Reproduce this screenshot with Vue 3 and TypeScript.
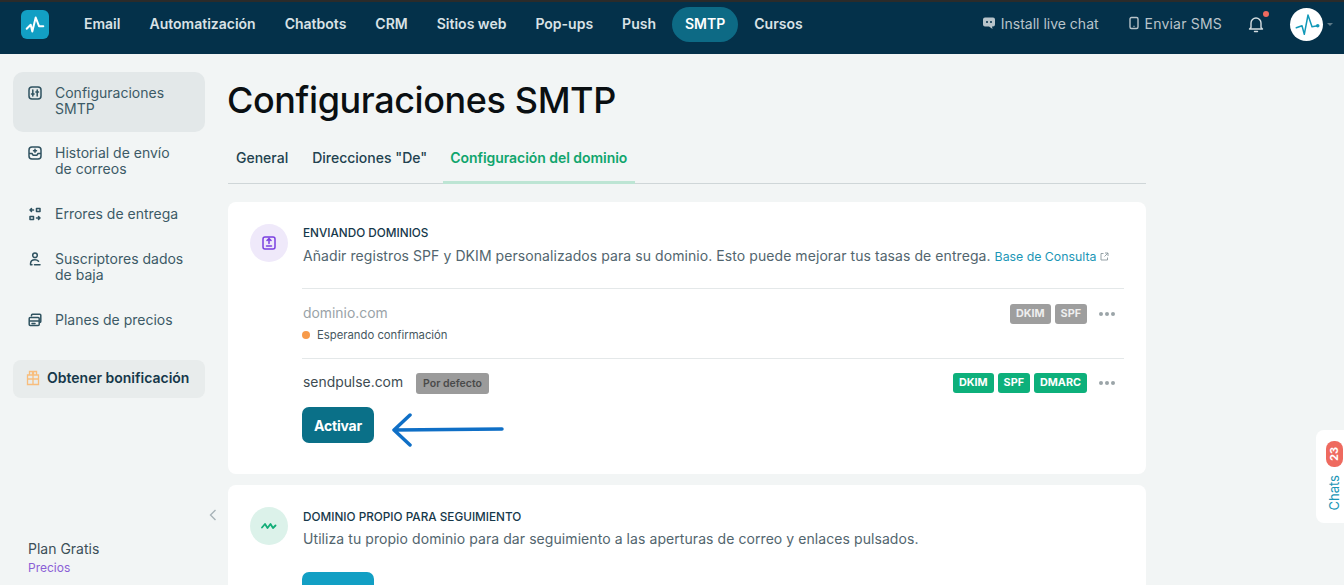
<script setup lang="ts">
interface SideItem {
  label: string
  icon: string
  active?: boolean
}

const navItems = ['Email', 'Automatización', 'Chatbots', 'CRM', 'Sitios web', 'Pop-ups', 'Push', 'SMTP', 'Cursos']

const sideItems: SideItem[] = [
  {
    label: 'Configuraciones SMTP',
    active: true,
    icon: 'M5 2h6a3 3 0 0 1 3 3v6a3 3 0 0 1-3 3H5a3 3 0 0 1-3-3V5a3 3 0 0 1 3-3ZM5.800 5v6M10.200 5v6M4.500 9h2.600M8.900 7h2.600'
  },
  {
    label: 'Historial de envío de correos',
    icon: 'M5 2h6a3 3 0 0 1 3 3v6a3 3 0 0 1-3 3H5a3 3 0 0 1-3-3V5a3 3 0 0 1 3-3ZM2 8.500h3l1 1.700h4l1-1.700h3M8 4.300v3M6.500 5.800h3'
  },
  {
    label: 'Errores de entrega',
    icon: 'M9.500 2.500h3.500v3H9.500ZM3 10.500h3.500v3H3ZM6.500 4H3M4.500 2.500 3 4l1.500 1.500M9.500 12H13M11.500 10.500 13 12l-1.500 1.500'
  },
  {
    label: 'Suscriptores dados de baja',
    icon: 'M8 2a2.300 2.300 0 1 1 0 4.600A2.300 2.300 0 0 1 8 2ZM11.500 10.200C10.700 9.300 9.500 8.800 8 8.800c-2.700 0-4.500 1.800-4.500 4.200M3.500 13.800h1.500M7.500 13.800h5.500'
  },
  {
    label: 'Planes de precios',
    icon: 'M4.500 3.800V3.200c0-.6.4-1 1-1h7.300c.6 0 1 .4 1 1v6.300c0 .6-.4 1-1 1M3.200 5.600h8a1 1 0 0 1 1 1v6a1 1 0 0 1-1 1h-8a1 1 0 0 1-1-1v-6a1 1 0 0 1 1-1ZM2.200 9h10M5 11.500h3'
  }
]
</script>

<template>
  <div class="page">
    <header class="topbar">
      <div class="logo">
        <svg width="20" height="20" viewBox="0 0 20 20" fill="none">
          <path d="M1.700 13.800 5.700 9.800l1.600 6.700 3.400-14L14 11.200h4.300" stroke="#fff" stroke-width="2" stroke-linecap="round" stroke-linejoin="round" />
        </svg>
      </div>
      <nav class="nav">
        <a v-for="item in navItems" :key="item" class="nav-link" :class="{ current: item === 'SMTP' }">{{ item }}</a>
      </nav>
      <div class="top-right">
        <span class="top-action chat">
          <svg width="14" height="14" viewBox="0 0 14 14">
            <path d="M3 1.500h8a2 2 0 0 1 2 2v5a2 2 0 0 1-2 2H10l.500 2.500L7 10.500H3a2 2 0 0 1-2-2v-5a2 2 0 0 1 2-2Z" fill="#b9c4ca" />
            <circle cx="5" cy="6" r="1" fill="#04314a" />
            <circle cx="9" cy="6" r="1" fill="#04314a" />
          </svg>
          Install live chat
        </span>
        <span class="top-action sms">
          <svg width="12" height="14" viewBox="0 0 12 14" fill="none">
            <rect x="2" y="1.500" width="8" height="11" rx="1.500" stroke="#b9c4ca" stroke-width="1.400" />
            <path d="M5.500 10.300h1" stroke="#b9c4ca" stroke-width="1.200" />
          </svg>
          Enviar SMS
        </span>
        <span class="bell">
          <svg width="16" height="18" viewBox="0 0 16 18" fill="none">
            <path d="M1.500 14h13L13 12.500V8a5 5 0 0 0-10 0v4.500ZM6.500 16.500h3" stroke="#d5dde1" stroke-width="1.400" stroke-linecap="round" stroke-linejoin="round" />
          </svg>
          <i class="bell-dot"></i>
        </span>
        <span class="avatar">
          <svg width="26" height="24" viewBox="0 0 26 24" fill="none">
            <path d="M2.300 15.700 8 13.700l2.300 8.600L14 3l4 11.700 5.700-1" stroke="#1299b8" stroke-width="1.500" stroke-linejoin="round" stroke-linecap="round" />
            <circle cx="23.700" cy="13.700" r="1.800" fill="#1299b8" />
          </svg>
        </span>
        <span class="caret"></span>
      </div>
    </header>

    <div class="body">
      <aside class="sidebar">
        <ul class="side-list">
          <li v-for="item in sideItems" :key="item.label" class="side-item" :class="{ active: item.active }">
            <svg class="side-icon" width="16" height="16" viewBox="0 0 16 16" fill="none">
              <path :d="item.icon" stroke="#2f5260" stroke-width="1.500" stroke-linecap="round" stroke-linejoin="round" />
            </svg>
            <span class="side-label">{{ item.label }}</span>
          </li>
        </ul>
        <div class="bonus">
          <svg width="14" height="16" viewBox="0 0 14 16" fill="none">
            <path d="M1.500 5h11v9.500h-11ZM1.500 9h11M7 5v9.500M3.500 1.500h3v3.500h-3ZM10.500 1.500h-3v3.500h3Z" stroke="#f8bd7c" stroke-width="1.300" />
          </svg>
          Obtener bonificación
        </div>
        <div class="side-spacer"></div>
        <div class="collapse-row">
          <svg width="8" height="12" viewBox="0 0 8 12" fill="none">
            <path d="M6.500 1 1.500 6l5 5" stroke="#a8b3b8" stroke-width="1.400" />
          </svg>
        </div>
        <div class="plan">
          <div class="plan-name">Plan Gratis</div>
          <div class="plan-link">Precios</div>
        </div>
      </aside>

      <main class="main">
        <h1 class="title">Configuraciones SMTP</h1>
        <div class="tabs">
          <span class="tab">General</span>
          <span class="tab">Direcciones "De"</span>
          <span class="tab selected">Configuración del dominio</span>
        </div>

        <section class="card first">
          <div class="circle violet">
            <svg width="16" height="16" viewBox="0 0 16 16" fill="none">
              <path d="M4 2h1.500M10.500 2H12a2 2 0 0 1 2 2v8a2 2 0 0 1-2 2H4a2 2 0 0 1-2-2V4a2 2 0 0 1 2-2ZM8 3.500v5M6 5.500l2-2 2 2M5.500 11h5" stroke="#7a3fe0" stroke-width="1.500" stroke-linecap="round" stroke-linejoin="round" />
            </svg>
          </div>
          <div class="card-body">
            <h2 class="card-title">ENVIANDO DOMINIOS</h2>
            <p class="card-text">
              Añadir registros SPF y DKIM personalizados para su dominio. Esto puede mejorar tus tasas de entrega.
              <a class="kb">Base de Consulta
                <svg width="9" height="9" viewBox="0 0 9 9" fill="none">
                  <path d="M3.500 1.500H1v6.500h6.500V5.500M5 1h3v3M8 1 4.500 4.500" stroke="#8a979d" stroke-width=".9" />
                </svg>
              </a>
            </p>

            <div class="row pending">
              <div>
                <div class="domain muted">dominio.com</div>
                <div class="status"><i class="dot"></i>Esperando confirmación</div>
              </div>
              <div class="row-right">
                <span class="tag gray">DKIM</span>
                <span class="tag gray">SPF</span>
                <span class="dots"><i></i><i></i><i></i></span>
              </div>
            </div>

            <div class="row confirmed">
              <div class="domain-line">
                <span class="domain">sendpulse.com</span>
                <span class="default-tag">Por defecto</span>
              </div>
              <div class="row-right">
                <span class="tag green">DKIM</span>
                <span class="tag green">SPF</span>
                <span class="tag green">DMARC</span>
                <span class="dots"><i></i><i></i><i></i></span>
              </div>
            </div>

            <div class="action-line">
              <button class="btn dark">Activar</button>
              <svg class="arrow" width="114" height="34" viewBox="0 0 114 34" fill="none">
                <path d="M111 16 4 17M19 2 3 17l16 15" stroke="#0f6fc6" stroke-width="3.500" stroke-linecap="round" stroke-linejoin="round" />
              </svg>
            </div>
          </div>
        </section>

        <section class="card second">
          <div class="circle mint">
            <svg width="16" height="10" viewBox="0 0 16 10" fill="none">
              <path d="M1 6.500 4 3l2.500 4L9.500 3l2.500 4 2.500-2.500" stroke="#12ad78" stroke-width="1.800" stroke-linecap="round" stroke-linejoin="round" />
            </svg>
          </div>
          <div class="card-body">
            <h2 class="card-title">DOMINIO PROPIO PARA SEGUIMIENTO</h2>
            <p class="card-text">Utiliza tu propio dominio para dar seguimiento a las aperturas de correo y enlaces pulsados.</p>
            <button class="btn blue">Activar</button>
          </div>
        </section>
      </main>

      <aside class="chats">
        <span class="chats-count">23</span>
        <span class="chats-label">Chats</span>
      </aside>
    </div>
  </div>
</template>

<style>
html,
body {
  margin: 0;
  height: 100%;
  overflow: hidden;
  background: #f2f5f5;
}
</style>

<style scoped>
.page {
  height: 585px;
  overflow: hidden;
  font-family: Inter, "Noto Sans", sans-serif;
  color: #0b2a38;
  background: #f2f5f5;
  position: relative;
}

.topbar {
  box-sizing: content-box;
  height: 47px;
  border-top: 2px solid #2b2b2a;
  background: #04314a;
  display: flex;
  align-items: flex-start;
  padding: 5px 11px 0 21px;
}

.logo {
  width: 28px;
  height: 29px;
  margin-top: 3px;
  border-radius: 6px;
  background: #129fc4;
  display: flex;
  align-items: center;
  justify-content: center;
}

.nav {
  display: flex;
  align-items: center;
  margin-left: 22px;
  gap: 3px;
}

.nav-link {
  box-sizing: border-box;
  height: 35px;
  padding: 0 13px 3px;
  border-radius: 18px;
  display: flex;
  align-items: center;
  font-size: 14px;
  font-weight: 600;
  color: #d9e2e6;
}

.nav-link.current {
  background: #0d6a85;
  color: #fff;
}

.top-right {
  margin-left: auto;
  height: 34px;
  display: flex;
  align-items: center;
}

.top-action {
  display: flex;
  align-items: center;
  gap: 5px;
  margin-bottom: 2px;
  font-size: 14px;
  color: #b9c4ca;
}

.chat {
  margin-right: 29px;
}

.sms {
  margin-right: 23px;
  letter-spacing: 0.2px;
}

.bell {
  position: relative;
  display: flex;
  margin-right: 26px;
  margin-left: 3px;
}

.bell-dot {
  position: absolute;
  top: -4px;
  right: -5px;
  width: 6px;
  height: 6px;
  border-radius: 50%;
  background: #ee6a5f;
}

.avatar {
  width: 33px;
  height: 33px;
  border-radius: 50%;
  background: #fff;
  display: flex;
  align-items: center;
  justify-content: center;
}

.caret {
  margin-left: 4px;
  width: 0;
  height: 0;
  border: 3px solid transparent;
  border-top-color: #5d7a88;
  margin-top: 3px;
}

.body {
  display: flex;
  height: 531px;
}

.sidebar {
  width: 228px;
  flex-shrink: 0;
  box-sizing: border-box;
  padding: 18px 23px 9px 13px;
  display: flex;
  flex-direction: column;
}

.side-list {
  list-style: none;
  margin: 0;
  padding: 0;
}

.side-item {
  display: flex;
  gap: 12px;
  padding: 13px 14px 15px;
  border-radius: 10px;
  font-size: 14px;
  line-height: 16px;
  color: #3c5a66;
}

.side-item.active {
  background: #e3e8e9;
  margin-bottom: 4px;
}

.side-item:not(.active) {
  padding-top: 9px;
  padding-bottom: 12px;
  margin-bottom: 8px;
}

.side-icon {
  flex-shrink: 0;
  width: 16px;
  height: 16px;
}

.side-label {
  max-width: 132px;
}

.bonus {
  margin-top: 12px;
  box-sizing: border-box;
  height: 38px;
  border-radius: 8px;
  background: #e8ecec;
  display: flex;
  align-items: center;
  gap: 7px;
  padding: 0 0 3px 13px;
  font-size: 14px;
  font-weight: 600;
  color: #16384a;
}

.side-spacer {
  flex: 1;
}

.collapse-row {
  display: flex;
  justify-content: flex-end;
  margin-right: -12px;
  margin-bottom: 19px;
}

.plan {
  padding-left: 15px;
}

.plan-name {
  font-size: 14px;
  line-height: 18px;
  color: #3c4f58;
}

.plan-link {
  margin-top: 2px;
  font-size: 12px;
  line-height: 16px;
  color: #8a5fd6;
}

.main {
  width: 918px;
  flex-shrink: 0;
}

.title {
  margin: 23px 0 0 -1px;
  font-size: 36px;
  line-height: 46px;
  font-weight: 500;
  color: #0a0f12;
  letter-spacing: -0.4px;
}

.tabs {
  display: flex;
  margin-top: 17px;
  border-bottom: 1px solid #cfd6d8;
}

.tab {
  padding: 9px 8px 17px;
  margin-right: 8px;
  font-size: 14px;
  line-height: 17px;
  font-weight: 500;
  color: #22424f;
}

.tab.selected {
  margin-right: 0;
  padding-left: 7px;
  padding-bottom: 15px;
  color: #10a56d;
  font-weight: 600;
  border-bottom: 3px solid #bde5d4;
  margin-bottom: -1px;
  letter-spacing: -0.05px;
}

.card {
  background: #fff;
  border-radius: 8px;
  display: flex;
  gap: 14px;
  padding: 22px 22px 0;
  box-sizing: border-box;
}

.first {
  margin-top: 18px;
  height: 272px;
}

.second {
  margin-top: 11px;
  height: 200px;
}

.circle {
  width: 38px;
  height: 38px;
  border-radius: 50%;
  flex-shrink: 0;
  display: flex;
  align-items: center;
  justify-content: center;
}

.violet {
  background: #efe9fa;
}

.mint {
  background: #dcf2ea;
}

.card-body {
  flex: 1;
  min-width: 0;
}

.card-title {
  margin: 2px 0 0 1px;
  font-size: 11.750px;
  line-height: 15px;
  font-weight: 500;
  color: #16384a;
}

.second .card-title {
  margin-top: 3px;
}

.card-text {
  margin: 5px 0 0 1px;
  font-size: 14px;
  line-height: 19px;
  letter-spacing: 0.07px;
  color: #52656e;
  white-space: nowrap;
}

.second .card-text {
  margin-top: 4px;
}

.kb {
  font-size: 12.300px;
  letter-spacing: 0;
  color: #1b96b6;
}

.row {
  display: flex;
  justify-content: space-between;
  border-top: 1px solid #e4e8e9;
  box-sizing: border-box;
}

.pending {
  margin-top: 22px;
  height: 70px;
  padding-top: 15px;
}

.confirmed {
  height: 46px;
  padding-top: 14px;
}

.domain {
  font-size: 13.900px;
  line-height: 18px;
  margin-left: 1px;
  color: #3e4c52;
}

.domain.muted {
  display: block;
  color: #9aa3a8;
}

.status {
  display: flex;
  align-items: center;
  margin-top: 6px;
  font-size: 11.300px;
  line-height: 14px;
  color: #47585f;
}

.dot {
  width: 8px;
  height: 8px;
  border-radius: 50%;
  background: #f79a4a;
  margin-right: 7px;
}

.domain-line {
  display: flex;
  align-items: flex-start;
  gap: 13px;
}

.default-tag {
  height: 21px;
  padding: 0 7px;
  border-radius: 3px;
  background: #9b9b9b;
  font-size: 10.500px;
  line-height: 21px;
  font-weight: 600;
  color: #4a4a4a;
}

.row-right {
  display: flex;
  align-items: flex-start;
  gap: 4px;
}

.tag {
  height: 20px;
  padding: 0 6px;
  border-radius: 3px;
  font-size: 10.800px;
  line-height: 20px;
  font-weight: 700;
  color: #fff;
}

.gray {
  background: #9e9e9e;
  color: #eeeeee;
}

.green {
  background: #0db07b;
}

.dots {
  display: flex;
  gap: 2px;
  height: 20px;
  align-items: center;
  margin-left: 8px;
  margin-right: 9px;
}

.dots i {
  width: 4px;
  height: 4px;
  border-radius: 50%;
  background: #9ba4a8;
}

.action-line {
  display: flex;
  align-items: flex-start;
  gap: 17px;
  margin-top: 3px;
}

.btn {
  width: 72px;
  height: 36px;
  padding: 0;
  border: 0;
  border-radius: 7px;
  font-family: inherit;
  font-size: 14px;
  font-weight: 700;
  letter-spacing: -0.2px;
  color: #fff;
}

.dark {
  background: #0a7088;
}

.blue {
  margin-top: 24px;
  background: #129fc4;
}

.arrow {
  margin-top: 6px;
}

.chats {
  position: absolute;
  right: 0;
  top: 430px;
  width: 28px;
  height: 93px;
  box-sizing: border-box;
  padding: 11px 0 0 8px;
  background: #fff;
  border-radius: 8px 0 0 8px;
  display: flex;
  flex-direction: column;
  align-items: center;
  gap: 8px;
}

.chats-count {
  writing-mode: vertical-rl;
  transform: rotate(180deg);
  width: 17px;
  height: 26px;
  border-radius: 8px;
  background: #ee6a5f;
  font-size: 11px;
  font-weight: 700;
  line-height: 17px;
  text-align: center;
  color: #fff;
}

.chats-label {
  writing-mode: vertical-rl;
  transform: rotate(180deg);
  font-size: 13px;
  line-height: 14px;
  color: #1b96b6;
}
</style>
